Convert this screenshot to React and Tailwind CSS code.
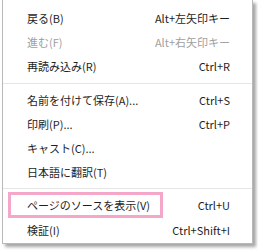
const items = [
  { label: '戻る(B)', key: 'Alt+左矢印キー' },
  { label: '進む(F)', key: 'Alt+右矢印キー', disabled: true },
  { label: '再読み込み(R)', key: 'Ctrl+R' },
  { sep: true },
  { label: '名前を付けて保存(A)...', key: 'Ctrl+S' },
  { label: '印刷(P)...', key: 'Ctrl+P' },
  { label: 'キャスト(C)...' },
  { label: '日本語に翻訳(T)' },
  { sep: true },
  { label: 'ページのソースを表示(V)', key: 'Ctrl+U', marked: true },
  { label: '検証(I)', key: 'Ctrl+Shift+I' },
]

function Row({ item }) {
  const color = item.disabled ? 'text-[#a0a0a0]' : 'text-[#1e1e1e]'
  if (item.marked) {
    return (
      <div className={`flex items-center h-[26px] whitespace-nowrap ${color}`}>
        <div className="ml-[5px] w-[155px] h-[26px] border-[3px] border-[#f4a7c9] flex items-center pl-[16px]">
          {item.label}
        </div>
        <span className="ml-auto mr-[22px]">{item.key}</span>
      </div>
    )
  }
  return (
    <div className={`flex items-center h-[24px] pl-[24px] pr-[22px] whitespace-nowrap ${color}`}>
      <span>{item.label}</span>
      {item.key && <span className="ml-auto">{item.key}</span>}
    </div>
  )
}

export default function App() {
  return (
    <div className="w-[258px] h-[251px] bg-white relative overflow-hidden">
      <div
        className="absolute left-[2px] top-0 w-[251px] h-[244px] bg-white border-l border-r border-b border-[#b9b9b9] shadow-[3px_3px_3px_rgba(0,0,0,0.35)] pt-[6px] text-[11px] leading-none"
        style={{ fontFamily: '"Noto Sans CJK JP", "Noto Sans", sans-serif' }}
      >
        {items.map((item, i) =>
          item.sep ? (
            <div key={i} className={i === 3 ? 'h-[10px] flex items-center' : 'h-[8px] flex items-center'}>
              <div className="w-full h-px bg-[#e6e6e6]" />
            </div>
          ) : (
            <Row key={i} item={item} />
          )
        )}
      </div>
    </div>
  )
}
